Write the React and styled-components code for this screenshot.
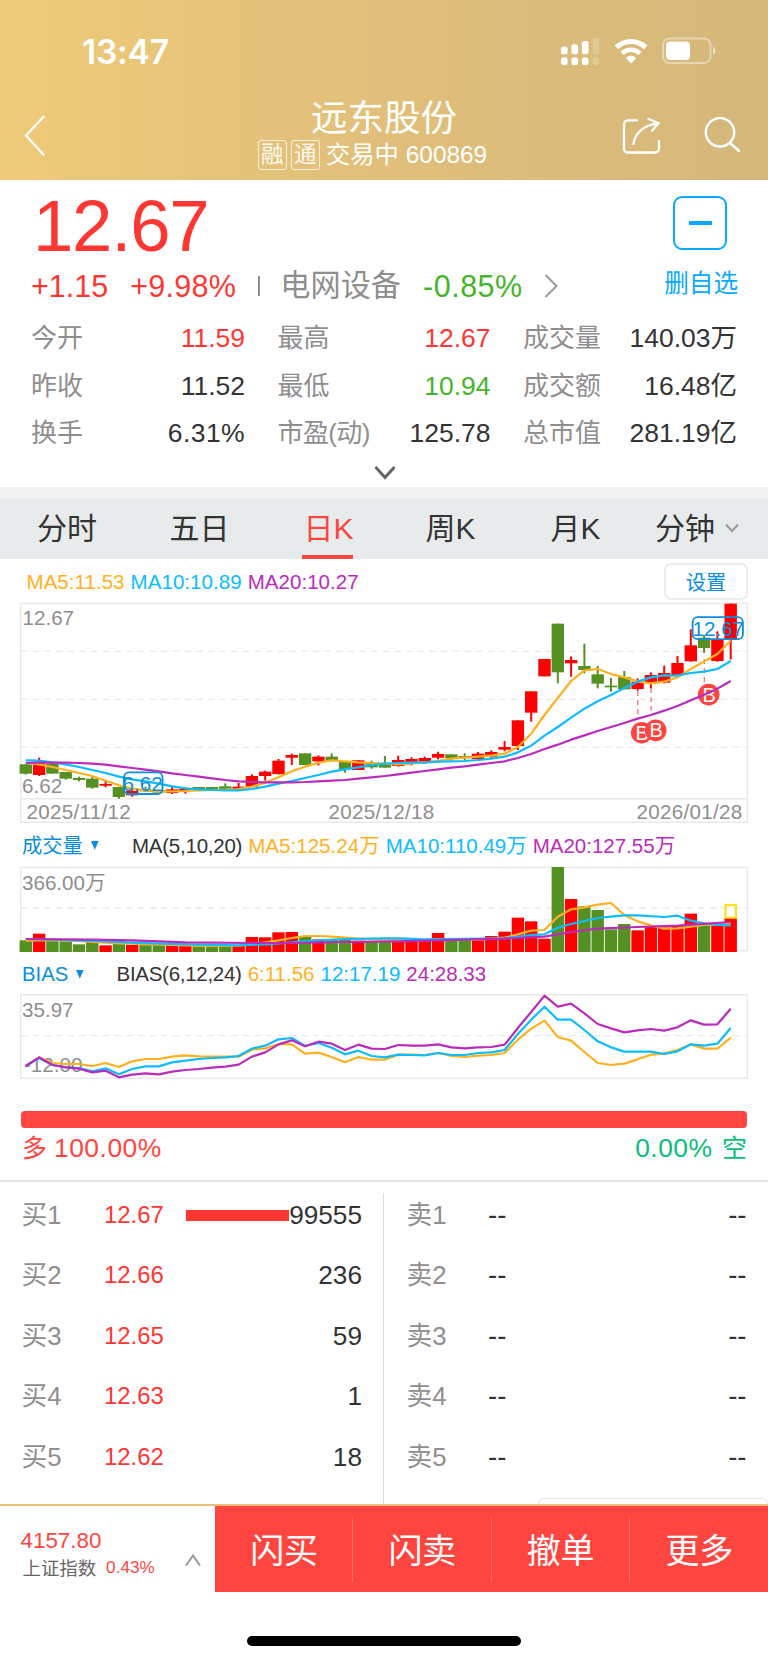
import React from "react";
import styled, { createGlobalStyle } from "styled-components";

const RED = "#ff3733";
const BRAND = "#ff4540";
const GREEN = "#46b42b";
const BLUE = "#09a9ff";
const LINK = "#0a8ddd";
const INK = "#333";
const GREY = "#8e8e8e";
const ORANGE = "#ffb01e";
const CYAN = "#0cbcff";
const PURPLE = "#b92cbb";
const UP = "#ff0000";
const DOWN = "#559122";

const Global = createGlobalStyle`
  * { box-sizing: border-box; }
  body {
    margin: 0;
    background: #fff;
    color: ${INK};
    font-family: "Liberation Sans", "Noto Sans CJK SC", sans-serif;
    font-weight: 400;
  }
  svg { display: block; flex: none; }
  button { font: inherit; color: inherit; background: none; border: 0; padding: 0; }
`;

const Screen = styled.div`
  width: 768px;
  height: 1663px;
  display: flex;
  flex-direction: column;
  overflow: hidden;
  white-space: nowrap;
`;

/* ---------- header ---------- */
const Header = styled.header`
  height: 180px;
  flex: none;
  color: #fff;
  background: linear-gradient(90deg, #eeca78 0%, #e2c07a 45%, #d4b77b 100%);
`;
const StatusBar = styled.div`
  height: 96px;
  display: flex;
  align-items: center;
  justify-content: space-between;
  padding: 6px 51px 0 82px;
`;
const Clock = styled.span`
  font: 600 33.5px/40px Inter, sans-serif;
  letter-spacing: -0.2px;
  padding-top: 2px;
`;
const StatusIcons = styled.div`
  display: flex;
  align-items: center;
  gap: 14px;
`;
const NavBar = styled.nav`
  height: 84px;
  display: grid;
  grid-template-columns: 200px 1fr 200px;
`;
const NavSide = styled.div`
  display: flex;
  align-items: flex-start;
  justify-content: ${(p) => (p.$end ? "flex-end" : "flex-start")};
  gap: 43px;
  padding: ${(p) => (p.$end ? "21px 27px 0 0" : "19px 0 0 23.5px")};
`;
const TitleBlock = styled.div`
  display: flex;
  flex-direction: column;
  align-items: center;
`;
const Title = styled.h1`
  margin: 0;
  padding-top: 1px;
  font-size: 36.5px;
  line-height: 43px;
  font-weight: 400;
`;
const Subtitle = styled.div`
  display: flex;
  align-items: center;
  height: 30px;
  margin-right: 23px;
  font-size: 24.4px;
  line-height: 30px;
`;
const Badge = styled.span`
  width: 29px;
  height: 30px;
  margin-right: ${(p) => p.$gap}px;
  border: 1.5px solid rgba(255, 255, 255, 0.85);
  border-radius: 3px;
  display: flex;
  align-items: center;
  justify-content: center;
  font-size: 22.5px;
  line-height: 26px;
  opacity: 0.9;
`;

/* ---------- quote ---------- */
const Quote = styled.section`
  height: 307px;
  flex: none;
  padding: 16px 31px 0 31px;
`;
const QuoteTop = styled.div`
  display: flex;
  justify-content: space-between;
  height: 112px;
`;
const Price = styled.div`
  color: ${RED};
  font-size: 72.5px;
  line-height: 59px;
  height: 67px;
  padding-left: 2px;
  letter-spacing: -1.2px;
`;
const ChangeRow = styled.div`
  display: flex;
  align-items: center;
  height: 46px;
  font-size: 30.5px;
`;
const Change = styled.span`
  color: ${(p) => p.$color};
  margin-right: ${(p) => p.$gap}px;
  letter-spacing: ${(p) => p.$track || 0}px;
`;
const Sector = styled.span`
  color: ${GREY};
  font-size: 30.2px;
  line-height: 40px;
  margin: 0 22px 0 20px;
`;
const Tick = styled.i`
  width: 2px;
  height: 20px;
  background: ${GREY};
`;
const Watch = styled.button`
  display: flex;
  flex-direction: column;
  align-items: flex-end;
  margin-right: -1px;
  color: ${BLUE};
  font-size: 24.6px;
  line-height: 34px;
`;
const WatchBox = styled.span`
  width: 54px;
  height: 54px;
  margin: 0 11px 17px 0;
  border: 2px solid ${BLUE};
  border-radius: 9px;
  display: flex;
  align-items: center;
  justify-content: center;
`;
const Dash = styled.i`
  width: 23px;
  height: 4px;
  background: ${BLUE};
`;
const Stats = styled.dl`
  margin: 0;
  padding-top: 6px;
  display: grid;
  grid-template-columns: 214px 213px 214px;
  column-gap: 32.5px;
  grid-auto-rows: 47.8px;
`;
const Stat = styled.div`
  display: flex;
  justify-content: space-between;
  align-items: center;
`;
const StatLabel = styled.dt`
  color: ${GREY};
  font-size: 26px;
  line-height: 36px;
  letter-spacing: ${(p) => p.$track}px;
`;
const StatValue = styled.dd`
  margin: 0;
  color: ${(p) => p.$color || INK};
  font-size: 26.5px;
  line-height: 36px;
  letter-spacing: ${(p) => p.$track}px;
`;
const Expand = styled.div`
  display: flex;
  justify-content: center;
  padding: 7.5px 0 0 1px;
`;

/* ---------- tabs ---------- */
const Tabs = styled.nav`
  height: 72px;
  flex: none;
  border-top: 11px solid #f1f1f1;
  background: #e8ebec;
  padding-left: 37px;
  display: grid;
  grid-template-columns: 132.5px 131px 125px 125px 104.5px 1fr;
  font-size: 30px;
  line-height: 40px;
`;
const Tab = styled.div`
  display: flex;
  flex-direction: column;
  align-items: flex-start;
  color: ${(p) => (p.$active ? BRAND : INK)};
  padding-left: ${(p) => (p.$active ? 1.5 : 0)}px;
`;
const TabLabel = styled.span`
  height: 56.5px;
  padding-left: ${(p) => (p.$active ? 1.5 : 0)}px;
  padding-top: 6px;
  display: flex;
  align-items: center;
  gap: 10px;
  svg { margin-bottom: 2px; }
`;
const Underline = styled.i`
  width: 51px;
  height: 4px;
  background: ${BRAND};
`;

/* ---------- charts ---------- */
const Legend = styled.div`
  height: ${(p) => p.$height}px;
  flex: none;
  padding: ${(p) => p.$top || 0}px 20px 0 ${(p) => p.$left}px;
  display: flex;
  align-items: center;
  font-size: 20.5px;
  line-height: 30px;
`;
const Metric = styled.span`
  color: ${(p) => p.$color || INK};
  margin-right: ${(p) => p.$gap ?? 6}px;
  letter-spacing: ${(p) => p.$track || 0}px;
`;
const Picker = styled.button`
  display: flex;
  align-items: center;
  width: ${(p) => p.$width}px;
  gap: ${(p) => p.$gap}px;
  font-size: 20.3px;
  color: ${LINK};
`;
const Settings = styled.button`
  margin-left: auto;
  width: 84px;
  height: 37px;
  border: 2px solid #ececec;
  border-radius: 7px;
  color: ${LINK};
  font-size: 20.3px;
  line-height: 30px;
  padding-top: 3px;
`;
const Plot = styled.svg`
  width: 768px;
  height: ${(p) => p.$h}px;
  font-size: 20.6px;
  fill: none;
  text { fill: ${GREY}; }
`;
const DateText = styled.text`
  letter-spacing: 0.3px;
`;
const TagText = styled.text`
  && { fill: ${(p) => p.$color}; }
`;

/* ---------- long / short ratio ---------- */
const Ratio = styled.section`
  height: 102px;
  flex: none;
  padding: 31px 21px 0;
  border-bottom: 2px solid #e4e4e4;
`;
const RatioBar = styled.div`
  height: 16.5px;
  border-radius: 4px;
  background: ${BRAND};
`;
const RatioText = styled.div`
  display: flex;
  justify-content: space-between;
  padding: 2px 0 0 1px;
  font-size: 26.4px;
  line-height: 36px;
`;
const Side = styled.span`
  color: ${(p) => p.$color};
  display: flex;
  gap: ${(p) => p.$gap}px;
  letter-spacing: 0.5px;
  small { font-size: 25px; letter-spacing: 0; }
`;

/* ---------- order book ---------- */
const Book = styled.section`
  height: 322px;
  flex: none;
  display: grid;
  grid-template-columns: 384px 1fr;
`;
const BookSide = styled.div`
  margin-top: ${(p) => (p.$buy ? 11 : 0)}px;
  padding-top: ${(p) => (p.$buy ? 0 : 11)}px;
  border-right: ${(p) => (p.$buy ? "1px solid #dcdcdc" : "none")};
  display: flex;
  flex-direction: column;
  position: relative;
`;
const Level = styled.div`
  height: 60.5px;
  margin-top: ${(p) => (p.$first ? -8.5 : 0)}px;
  display: grid;
  align-items: center;
  grid-template-columns: ${(p) => (p.$buy ? "82.5px 82px 1fr auto" : "81.5px 1fr auto")};
  padding: ${(p) => (p.$buy ? "0 21px 0 21.5px" : "0 21.5px 0 22.5px")};
  font-size: 26.2px;
  line-height: 36px;
`;
const LevelName = styled.span`
  color: ${GREY};
  font-size: 25.7px;
`;
const LevelPrice = styled.span`
  color: ${(p) => (p.$buy ? RED : INK)};
  font-size: ${(p) => (p.$buy ? 23.9 : 27.5)}px;
`;
const Lots = styled.span`
  font-size: ${(p) => (p.$empty ? 27.5 : 26.2)}px;
`;
const DepthBar = styled.i`
  height: 11px;
  margin-top: 2px;
  background: ${(p) => (p.$show ? RED : "transparent")};
`;
const Sheet = styled.div`
  position: absolute;
  right: 0;
  bottom: 0;
  width: 230px;
  height: 6px;
  border: 1.5px solid #e4e4e4;
  border-bottom: 0;
  border-radius: 6px 6px 0 0;
`;

/* ---------- footer ---------- */
const Footer = styled.footer`
  height: 88px;
  flex: none;
  border-top: 2px solid #e9c178;
  display: grid;
  grid-template-columns: 215px 1fr;
`;
const IndexBox = styled.div`
  display: flex;
  align-items: center;
  justify-content: space-between;
  padding: 0 14px 0 20.5px;
  svg { margin-top: 21px; }
`;
const IndexText = styled.div`
  display: flex;
  flex-direction: column;
  color: ${BRAND};
  font-size: 22.4px;
  line-height: 28px;
  padding-top: 9px;
`;
const IndexRow = styled.div`
  display: flex;
  gap: 10px;
  padding-left: 2px;
  font-size: 17.2px;
  line-height: 25px;
`;
const IndexName = styled.span`
  color: #666;
  font-size: 18.4px;
  padding-top: 1px;
`;
const Actions = styled.div`
  background: ${BRAND};
  color: #fff;
  display: grid;
  grid-template-columns: repeat(4, 1fr);
  align-items: center;
`;
const Action = styled.button`
  height: 65px;
  padding: 4px 0 0 1px;
  border-right: ${(p) => (p.$last ? "0" : "1px solid rgba(255,255,255,.2)")};
  font-size: 34px;
  line-height: 60px;
`;
const HomeArea = styled.div`
  flex: 1;
  display: flex;
  justify-content: center;
  padding-top: 44px;
`;
const HomeIndicator = styled.i`
  width: 274px;
  height: 10px;
  border-radius: 5px;
  background: #000;
`;

/* ---------- data ---------- */
const stats = [
  ["今开", "11.59", RED], ["最高", "12.67", RED], ["成交量", "140.03万"],
  ["昨收", "11.52"], ["最低", "10.94", GREEN], ["成交额", "16.48亿"],
  ["换手", "6.31%"], ["市盈(动)", "125.78"], ["总市值", "281.19亿"],
];
const buys = [["买1", "12.67", "99555"], ["买2", "12.66", "236"], ["买3", "12.65", "59"], ["买4", "12.63", "1"], ["买5", "12.62", "18"]];
const sells = ["卖1", "卖2", "卖3", "卖4", "卖5"];

// Chart values are stored in thirds of a pixel, measured downwards.
const STEP = 13.3;
const X0 = 25.8;
const px = (i) => X0 + i * STEP;

// direction, body top, body bottom, high, low
const candles = [
  ["g", 523, 551, 523, 554], ["r", 515, 555, 503, 558], ["g", 520, 551, 520, 551], ["g", 546, 566, 546, 569],
  ["g", 564, 570, 560, 574], ["g", 566, 593, 560, 596], ["r", 582, 587, 573, 592], ["g", 591, 621, 591, 626],
  ["r", 603, 616, 600, 620], ["g", 598, 604, 590, 606], ["g", 600, 608, 600, 608], ["r", 598, 609, 590, 612],
  ["r", 596, 603, 593, 611], ["g", 591, 599, 591, 599], ["g", 591, 599, 591, 599], ["g", 589, 598, 580, 598],
  ["r", 590, 597, 579, 598], ["r", 558, 590, 553, 591], ["r", 545, 558, 542, 572], ["r", 512, 552, 507, 554],
  ["r", 495, 503, 491, 525], ["g", 490, 525, 490, 525], ["r", 500, 514, 496, 526], ["g", 500, 510, 490, 512],
  ["g", 514, 538, 514, 548], ["r", 511, 540, 511, 540], ["g", 520, 532, 512, 536], ["g", 522, 533, 498, 533],
  ["r", 510, 528, 497, 530], ["r", 507, 517, 502, 526], ["r", 504, 515, 500, 521], ["r", 492, 503, 485, 508],
  ["g", 493, 505, 493, 512], ["g", 498, 503, 490, 510], ["r", 491, 507, 486, 510], ["r", 486, 500, 481, 505],
  ["r", 471, 479, 453, 484], ["r", 391, 468, 391, 480], ["r", 304, 368, 304, 395], ["r", 207, 259, 207, 259],
  ["g", 101, 247, 101, 280], ["r", 210, 220, 199, 260], ["g", 228, 240, 161, 250], ["g", 253, 281, 228, 295],
  ["g", 287, 292, 264, 305], ["g", 261, 298, 243, 298], ["r", 275, 297, 265, 302], ["r", 255, 279, 247, 295],
  ["r", 249, 278, 227, 280], ["r", 219, 255, 198, 257], ["r", 166, 214, 118, 215], ["g", 143, 174, 135, 189],
  ["r", 150, 213, 124, 215], ["r", 41, 150, 41, 208],
];
const ma5 = [519, 523, 531, 540, 549, 558, 572, 586, 596, 602, 605, 604, 603, 601, 600, 599, 597, 590, 578, 562, 544, 530, 518, 511, 514, 517, 519, 521, 523, 520, 517, 513, 506, 503, 500, 497, 491, 471, 431, 375, 324, 273, 241, 237, 252, 262, 274, 280, 275, 262, 237, 214, 192, 152];
const ma10 = [511, 512, 517, 523, 531, 540, 549, 560, 568, 574, 581, 589, 595, 598, 600, 601, 601, 597, 590, 581, 573, 564, 555, 545, 538, 532, 525, 521, 519, 518, 517, 515, 514, 513, 510, 506, 500, 487, 467, 437, 411, 383, 356, 334, 315, 294, 275, 262, 256, 257, 249, 245, 237, 213];
const ma20 = [519, 518, 518, 518, 519, 521, 524, 529, 534, 539, 544, 550, 555, 560, 565, 570, 574, 576, 577, 577, 577, 576, 574, 572, 570, 566, 562, 558, 553, 548, 543, 538, 533, 529, 524, 519, 514, 504, 492, 477, 464, 449, 436, 423, 411, 399, 386, 375, 362, 348, 331, 314, 296, 273];

const volumes = [361, 341, 361, 364, 373, 365, 376, 359, 375, 375, 375, 376, 378, 379, 379, 379, 378, 351, 352, 337, 336, 348, 358, 360, 360, 362, 364, 365, 365, 362, 362, 339, 362, 360, 361, 348, 335, 293, 304, 356, 141, 237, 259, 270, 328, 312, 331, 320, 322, 317, 281, 316, 316, 293];
const vma5 = [362, 361, 361, 362, 363, 366, 368, 370, 371, 373, 374, 375, 376, 377, 378, 378, 377, 373, 367, 361, 354, 348, 348, 350, 353, 356, 358, 359, 360, 361, 360, 357, 358, 358, 358, 356, 353, 343, 332, 330, 290, 268, 262, 254, 249, 285, 304, 316, 326, 325, 320, 315, 314, 311];
const vma10 = [[0, 357], [2, 359], [5, 363], [8, 368], [12, 373], [16, 376], [18, 373], [20, 367], [22, 361], [24, 357], [27, 355], [28, 355], [30, 358], [36, 355], [38, 345], [39, 343], [40, 323], [41, 312], [42, 303], [43, 294], [44, 290], [45, 286], [46, 286], [48, 291], [49, 287], [50, 302], [51, 310], [52, 314], [53, 317]];
const vma20 = [[0, 357], [5, 359], [8, 361], [12, 367], [17, 369], [20, 369], [24, 366], [28, 364], [36, 356], [39, 350], [41, 336], [43, 326], [46, 321], [49, 317], [53, 306]];

const bias6 = [738, 712, 729, 732, 732, 738, 729, 741, 724, 717, 717, 710, 706, 709, 710, 710, 710, 689, 685, 672, 673, 701, 698, 711, 727, 711, 719, 719, 704, 704, 705, 699, 708, 711, 707, 705, 699, 659, 626, 602, 651, 662, 696, 729, 735, 731, 718, 704, 700, 690, 673, 686, 686, 653];
const bias12 = [738, 714, 735, 741, 744, 754, 745, 763, 747, 739, 739, 727, 722, 717, 714, 712, 708, 686, 677, 658, 654, 678, 669, 683, 703, 692, 708, 712, 704, 705, 706, 699, 705, 705, 699, 697, 690, 642, 599, 560, 599, 599, 630, 664, 682, 695, 695, 695, 702, 694, 673, 677, 671, 624];
const bias24 = [738, 712, 735, 742, 746, 757, 752, 772, 764, 760, 763, 755, 750, 747, 743, 740, 734, 710, 697, 673, 661, 679, 665, 671, 690, 674, 686, 687, 675, 677, 677, 673, 682, 685, 682, 681, 674, 624, 576, 527, 560, 551, 580, 612, 625, 637, 631, 627, 632, 622, 601, 614, 613, 566];

const tone = (c) => (c === "r" ? UP : DOWN);

const Series = ({ data, color }) => (
  <polyline
    points={data.map((d, i) => (Array.isArray(d) ? `${px(d[0])},${d[1] / 3}` : `${px(i)},${d / 3}`)).join(" ")}
    stroke={color}
    strokeWidth="2.2"
    strokeLinejoin="round"
  />
);
const Grid = ({ y }) => (
  <line x1="21" x2="747" y1={y} y2={y} stroke="#e9e9e9" strokeWidth="1.3" strokeDasharray="6.5 5.17" />
);
const Frame = ({ top, bottom }) => (
  <rect x="20.7" y={top} width="726.7" height={bottom - top} stroke="#e9e9e9" strokeWidth="1.4" />
);

const markers = [
  { x: 641.7, y: 142.7, line: 637.8, from: 101, to: 128 },
  { x: 655.7, y: 140.4, line: 651.1, from: 98, to: 125 },
  { x: 708.7, y: 104.6, line: 704.3, from: 69, to: 93 },
];

const PriceChart = () => (
  <Plot $h={223} viewBox="0 12 768 223">
    <Frame top={13.4} bottom={232.3} />
    {[61.3, 109.3, 157.3].map((y) => <Grid key={y} y={y} />)}
    <line x1="21" x2="747" y1="208.7" y2="208.7" stroke="#e9e9e9" strokeWidth="1.4" />
    <text x="22.5" y="35.3">12.67</text>
    <text x="22" y="203">6.62</text>
    <DateText x="26.5" y="229">2025/11/12</DateText>
    <DateText x="328.5" y="229">2025/12/18</DateText>
    <DateText x="636.5" y="229">2026/01/28</DateText>
    {candles.map(([c, t, b, h, l], i) => (
      <g key={i} fill={tone(c)}>
        <rect x={px(i) - 6.2} y={t / 3} width="12.4" height={(b - t) / 3} />
        <rect x={px(i) - 1} y={h / 3} width="2" height={(l - h) / 3} />
      </g>
    ))}
    {markers.map((m) => (
      <g key={m.x}>
        <line x1={m.line} x2={m.line} y1={m.from} y2={m.to} stroke="#f0686a" strokeWidth="1.2" strokeDasharray="5 4" />
        <circle cx={m.x} cy={m.y} r="10.8" fill={BRAND} />
        <TagText x={m.x + 0.5} y={m.y + 7} textAnchor="middle" $color="#fff" fontSize="20">B</TagText>
      </g>
    ))}
    <Series data={ma5} color={ORANGE} />
    <Series data={ma10} color={CYAN} />
    <Series data={ma20} color={PURPLE} />
    <g stroke={LINK} strokeWidth="1.8">
      <rect x="124" y="182.3" width="38.5" height="21.7" rx="5" />
      <rect x="692.6" y="27.2" width="50.3" height="22" rx="5" />
    </g>
    <TagText x="122.5" y="201" $color={LINK}>6.62</TagText>
    <TagText x="692.5" y="46" $color={LINK}>12.67</TagText>
  </Plot>
);

const VolumeChart = () => (
  <Plot $h={88} viewBox="0 46 768 88">
    <Frame top={47.4} bottom={130.6} />
    <Grid y={88} />
    <text x="22" y="69.7">366.00万</text>
    {volumes.map((v, i) => (
      <rect key={i} x={px(i) - 6.2} y={v / 3} width="12.4" height={132 - v / 3} fill={tone(candles[i][0])} />
    ))}
    <rect x={px(53) - 5.2} y="85" width="10.4" height="12.7" stroke="#ffe01a" strokeWidth="2.2" />
    <Series data={vma5} color={ORANGE} />
    <Series data={vma10} color={CYAN} />
    <Series data={vma20} color={PURPLE} />
  </Plot>
);

const BiasChart = () => (
  <Plot $h={86} viewBox="0 174 768 86">
    <Frame top={174.7} bottom={258.3} />
    <Grid y={215.6} />
    <text x="22" y="197.4">35.97</text>
    <text x="24" y="252.3">-12.00</text>
    <Series data={bias6} color={ORANGE} />
    <Series data={bias12} color={CYAN} />
    <Series data={bias24} color={PURPLE} />
  </Plot>
);

/* ---------- icons ---------- */
const SignalIcon = () => (
  <svg width="39" height="30" viewBox="0 0 39 30" fill="#fff">
    {[[0, 10.5], [10.4, 8.3], [20.8, 5], [31.5, 1.5]].map(([x, y], i) => (
      <g key={x} opacity={i === 3 ? 0.2 : 1}>
        <rect x={x} y={y} width="6.7" height={18.3 - y} rx="2.6" />
        <rect x={x} y="21.3" width="6.7" height="7.7" rx="2.8" />
      </g>
    ))}
  </svg>
);
const WifiIcon = () => (
  <svg width="34" height="26" viewBox="0 0 34 26" fill="none" stroke="#fff">
    <path d="M2.4 9.4a21 21 0 0 1 29.2 0" strokeWidth="5" />
    <path d="M8 15.4a13 13 0 0 1 18 0" strokeWidth="4.6" />
    <path d="M17 25.5l-5.2-5.6a7.4 7.4 0 0 1 10.4 0z" fill="#fff" stroke="none" />
  </svg>
);
const BatteryIcon = () => (
  <svg width="55" height="28" viewBox="0 0 55 28">
    <rect x="1" y="1.5" width="47.5" height="24.5" rx="6.5" fill="none" stroke="#fff" strokeOpacity=".42" strokeWidth="2" />
    <rect x="4" y="4.6" width="24" height="18.3" rx="4" fill="#fff" />
    <path d="M51 9.8c3.6 1.2 3.6 6.8 0 8z" fill="#fff" fillOpacity=".5" />
  </svg>
);
const BackIcon = () => (
  <svg width="24" height="42" viewBox="0 0 24 42" fill="none" stroke="#fff" strokeWidth="2.2">
    <path d="M20.2 1L2 20.5 20.2 40.5" />
  </svg>
);
const ShareIcon = () => (
  <svg width="39" height="38" viewBox="0 0 39 38" fill="none" stroke="#fff" strokeWidth="2.3" strokeLinecap="round">
    <path d="M15 3.3H6a4 4 0 0 0-4 4V31.5a4 4 0 0 0 4 4h27a4 4 0 0 0 4-4V24" />
    <path d="M11.5 27C12.5 17 21 8 36 6.3M26.5 2l10 4.3-6.5 7.5" />
  </svg>
);
const SearchIcon = () => (
  <svg width="37" height="37" viewBox="0 0 37 37" fill="none" stroke="#fff" strokeWidth="2.4" strokeLinecap="round">
    <circle cx="16" cy="15.3" r="14.2" />
    <path d="M26 26l9 8" />
  </svg>
);
const Chevron = ({ w, h, d, color, stroke }) => (
  <svg width={w} height={h} viewBox={`0 0 ${w} ${h}`} fill="none" stroke={color} strokeWidth={stroke}>
    <path d={d} />
  </svg>
);
const Caret = () => (
  <svg width="8" height="9" viewBox="0 0 8 9" fill={LINK}>
    <path d="M0 0h7.6L3.8 8.8z" />
  </svg>
);

export default function App() {
  return (
    <>
      <Global />
      <Screen>
        <Header>
          <StatusBar>
            <Clock>13:47</Clock>
            <StatusIcons>
              <SignalIcon />
              <WifiIcon />
              <BatteryIcon />
            </StatusIcons>
          </StatusBar>
          <NavBar>
            <NavSide><BackIcon /></NavSide>
            <TitleBlock>
              <Title>远东股份</Title>
              <Subtitle>
                <Badge $gap={4}>融</Badge>
                <Badge $gap={6}>通</Badge>
                交易中 600869
              </Subtitle>
            </TitleBlock>
            <NavSide $end>
              <ShareIcon />
              <SearchIcon />
            </NavSide>
          </NavBar>
        </Header>

        <Quote>
          <QuoteTop>
            <div>
              <Price>12.67</Price>
              <ChangeRow>
                <Change $color={RED} $gap={22}>+1.15</Change>
                <Change $color={RED} $gap={22} $track={0.3}>+9.98%</Change>
                <Tick />
                <Sector>电网设备</Sector>
                <Change $color={GREEN} $gap={21} $track={0.5}>-0.85%</Change>
                <Chevron w={14} h={24} d="M1.5 1L12.5 12 1.5 23" color="#999" stroke={2} />
              </ChangeRow>
            </div>
            <Watch>
              <WatchBox><Dash /></WatchBox>
              删自选
            </Watch>
          </QuoteTop>
          <Stats>
            {stats.map(([label, value, color]) => (
              <Stat key={label}>
                <StatLabel $track={label.includes("(") ? -0.6 : 0}>{label}</StatLabel>
                <StatValue $color={color} $track={value.endsWith("%") ? 0.4 : 0}>{value}</StatValue>
              </Stat>
            ))}
          </Stats>
          <Expand>
            <Chevron w={22} h={15} d="M1.5 2L11 12.5 20.5 2" color="#666" stroke={3} />
          </Expand>
        </Quote>

        <Tabs>
          {["分时", "五日", "日K", "周K", "月K", "分钟"].map((name) => {
            const active = name === "日K";
            return (
              <Tab key={name} $active={active}>
                <TabLabel $active={active}>
                  {name}
                  {name === "分钟" && <Chevron w={14} h={10} d="M1 1.5L7 8 13 1.5" color="#999" stroke={2} />}
                </TabLabel>
                {active && <Underline />}
              </Tab>
            );
          })}
        </Tabs>

        <Legend $height={43} $left={26.5} $top={2}>
          <Metric $color={ORANGE} $track={0.05}>MA5:11.53</Metric>
          <Metric $color={CYAN} $track={0.05}>MA10:10.89</Metric>
          <Metric $color={PURPLE} $track={0.05}>MA20:10.27</Metric>
          <Settings>设置</Settings>
        </Legend>
        <PriceChart />

        <Legend $height={41} $left={22}>
          <Picker $width={110} $gap={8}>成交量<Caret /></Picker>
          <Metric $track={-0.24}>MA(5,10,20)</Metric>
          <Metric $color={ORANGE} $track={0.05}>MA5:125.24万</Metric>
          <Metric $color={CYAN}>MA10:110.49万</Metric>
          <Metric $color={PURPLE}>MA20:127.55万</Metric>
        </Legend>
        <VolumeChart />

        <Legend $height={40} $left={22}>
          <Picker $width={94.5} $gap={7.5}>BIAS<Caret /></Picker>
          <Metric $track={-0.28}>BIAS(6,12,24)</Metric>
          <Metric $color={ORANGE}>6:11.56</Metric>
          <Metric $color={CYAN}>12:17.19</Metric>
          <Metric $color={PURPLE}>24:28.33</Metric>
        </Legend>
        <BiasChart />

        <Ratio>
          <RatioBar />
          <RatioText>
            <Side $color={BRAND} $gap={7}><small>多</small>100.00%</Side>
            <Side $color="#0bbd77" $gap={9.5}>0.00%<small>空</small></Side>
          </RatioText>
        </Ratio>

        <Book>
          <BookSide $buy>
            {buys.map(([name, price, lots], i) => (
              <Level key={name} $buy $first={i === 0}>
                <LevelName>{name}</LevelName>
                <LevelPrice $buy>{price}</LevelPrice>
                <DepthBar $show={i === 0} />
                <Lots>{lots}</Lots>
              </Level>
            ))}
          </BookSide>
          <BookSide>
            {sells.map((name, i) => (
              <Level key={name} $first={i === 0}>
                <LevelName>{name}</LevelName>
                <LevelPrice>--</LevelPrice>
                <Lots $empty>--</Lots>
              </Level>
            ))}
            <Sheet />
          </BookSide>
        </Book>

        <Footer>
          <IndexBox>
            <IndexText>
              4157.80
              <IndexRow><IndexName>上证指数</IndexName>0.43%</IndexRow>
            </IndexText>
            <Chevron w={16} h={12} d="M1 11.5L8 1.5 15 11.5" color="#999" stroke={2} />
          </IndexBox>
          <Actions>
            {["闪买", "闪卖", "撤单", "更多"].map((name, i) => (
              <Action key={name} $last={i === 3}>{name}</Action>
            ))}
          </Actions>
        </Footer>
        <HomeArea><HomeIndicator /></HomeArea>
      </Screen>
    </>
  );
}
